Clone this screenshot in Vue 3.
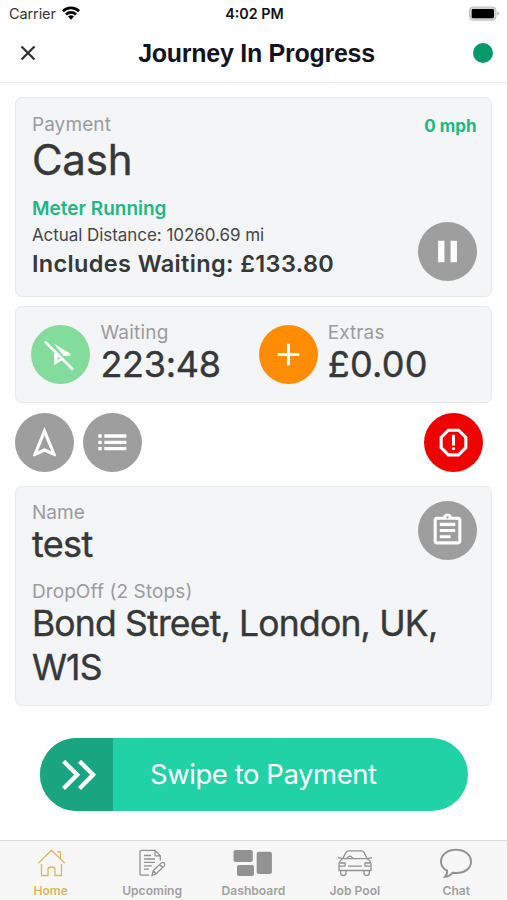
<script setup>
const tabs = [
  { id: 'home', label: 'Home', active: true },
  { id: 'upcoming', label: 'Upcoming' },
  { id: 'dashboard', label: 'Dashboard' },
  { id: 'pool', label: 'Job Pool' },
  { id: 'chat', label: 'Chat' },
]
</script>

<template>
  <div class="screen">
    <div class="status">
      <div class="carrier">
        <span>Carrier</span>
        <svg class="wifi" viewBox="0 0 18 14">
          <path d="M0 4.2A12.8 12.8 0 0 1 18 4.2L16.1 6.2A10 10 0 0 0 1.9 6.2Z" />
          <path d="M3 7.4A8.6 8.6 0 0 1 15 7.4L13.1 9.4A5.9 5.9 0 0 0 4.9 9.4Z" />
          <path d="M6 10.6A4.3 4.3 0 0 1 12 10.6L9 13.8Z" />
        </svg>
      </div>
      <span class="clock">4:02 PM</span>
      <svg class="battery" viewBox="0 0 32 16">
        <rect x="1.5" y="1" width="26.5" height="13.2" rx="3.4" fill="#d2d2d0" stroke="#c2c2bf" />
        <rect x="3.7" y="3.1" width="22.3" height="9.2" rx="1.4" fill="#000" />
        <path d="M29.4 5.4Q31 6.1 31 7.6Q31 9.1 29.4 9.8Z" fill="#aaa" />
      </svg>
    </div>

    <header class="header">
      <svg class="close" viewBox="0 0 16 16"><path d="M1.5 1.5L14.5 14.5M14.5 1.5L1.5 14.5" /></svg>
      <h1>Journey In Progress</h1>
      <i class="online"></i>
    </header>

    <main class="body">
      <section class="card payment">
        <div>
          <div class="label">Payment</div>
          <div class="cash">Cash</div>
          <div class="meter">Meter Running</div>
          <div class="distance">Actual Distance: 10260.69 mi</div>
          <div class="includes">Includes Waiting: £133.80</div>
        </div>
        <div class="side">
          <span class="speed">0 mph</span>
          <button class="round grey">
            <svg viewBox="0 0 24 24"><path d="M5.9 5.1h4.1v13.8H5.9zM14 5.1h4.1v13.8H14z" /></svg>
          </button>
        </div>
      </section>

      <section class="card meters">
        <div class="metric">
          <button class="round green">
            <svg class="full" viewBox="0 0 177 177">
              <path d="M69 56L118 86V92L98 93Z" />
              <path fill-rule="evenodd" d="M69 72L70 120L98 103ZM80 94L88 101L80 105Z" />
              <path d="M42 50L126 134" stroke="#fff" stroke-width="8" />
            </svg>
          </button>
          <div class="reading">
            <div class="label wide">Waiting</div>
            <div class="value waiting-value">223:48</div>
          </div>
        </div>
        <div class="metric">
          <button class="round orange">
            <svg viewBox="0 0 24 24"><path d="M19 13h-6v6h-2v-6H5v-2h6V5h2v6h6z" /></svg>
          </button>
          <div class="reading">
            <div class="label">Extras</div>
            <div class="value extras-value">£0.00</div>
          </div>
        </div>
      </section>

      <div class="actions">
        <button class="round grey">
          <svg viewBox="0 0 24 24"><path fill-rule="evenodd" d="M12 2L4.5 20.29l.71.71L12 18l6.79 3 .71-.71zM12 7.27l4.28 10.43L12 15.81L7.72 17.7z" /></svg>
        </button>
        <button class="round grey">
          <svg class="full" viewBox="0 0 177 177">
            <path d="M46 64h10v10H46zM46 83h10v10H46zM46 102h10v10H46zM64 64h66v10H64zM64 83h66v10H64zM64 102h66v10H64z" />
          </svg>
        </button>
        <button class="round red">
          <svg viewBox="0 0 24 24"><path fill-rule="evenodd" d="M15.73 3H8.27L3 8.27v7.46L8.27 21h7.46L21 15.73V8.27zM19 14.9L14.9 19H9.1L5 14.9V9.1L9.1 5h5.8L19 9.1z" /><path d="M11 7h2v7h-2z" /><circle cx="12" cy="16" r="1.1" /></svg>
        </button>
      </div>

      <section class="card trip">
        <button class="round grey clip">
          <svg viewBox="0 0 24 24"><path d="M7 15h7v2H7zm0-4h10v2H7zm0-4h10v2H7zm12-4h-4.18C14.4 1.84 13.3 1 12 1s-2.4.84-2.82 2H5c-1.1 0-2 .9-2 2v14c0 1.1.9 2 2 2h14c1.1 0 2-.9 2-2V5c0-1.1-.9-2-2-2zm-7-.25c.41 0 .75.34.75.75s-.34.75-.75.75-.75-.34-.75-.75.34-.75.75-.75zM19 19H5V5h14v14z" /></svg>
        </button>
        <div class="label">Name</div>
        <div class="value name-value">test</div>
        <div class="label drop-label">DropOff (2 Stops)</div>
        <div class="value address">Bond Street, London, UK, W1S</div>
      </section>

      <div class="swipe">
        <div class="thumb">
          <svg viewBox="0 0 220 220"><path d="M71 70L112 111L71 152M119 70L160 111L119 152" /></svg>
        </div>
        <span>Swipe to Payment</span>
      </div>
    </main>

    <nav class="tabs">
      <div v-for="t in tabs" :key="t.id" class="tab" :class="{ active: t.active }">
        <svg v-if="t.id === 'home'" viewBox="0 0 36 30">
          <path d="M5.3 15.2L18.5 2.2L31.8 15.2M24 3.8H27.5V10.6M8.5 16V27.5H15V21.5Q15 19 18.5 19Q22 19 22 21.5V27.5H28.5V16" />
        </svg>
        <svg v-else-if="t.id === 'upcoming'" viewBox="0 0 36 30">
          <path d="M15 27.2H7.5Q6 27.2 6 25.7V3.8Q6 2.3 7.5 2.3H21L26.3 7.8V12.5M21 2.3V7.8H26.3M10 7.5H17M10 11H21M10 14.4H21M10 17.8H18M10 21.2H15M18 27.5L19.3 22.5L27.7 14.7Q29 13.8 30.4 15.2Q31.4 16.6 30.3 17.8L22 26ZM19.3 22.5L22 26M25.8 16.5L28.5 19.5" />
        </svg>
        <svg v-else-if="t.id === 'dashboard'" class="solid" viewBox="0 0 42 30">
          <rect x="1.5" y="2" width="19.3" height="12" rx="2" />
          <rect x="5" y="17" width="17" height="11" rx="2" />
          <rect x="24.7" y="3.7" width="15.2" height="22.3" rx="2" />
        </svg>
        <svg v-else-if="t.id === 'pool'" viewBox="0 0 36 30">
          <path d="M5.8 10.7L9 4.4Q10 2.8 12 2.8H24Q26 2.8 27 4.4L30.2 10.7M1 9.7L5.8 10.7H30.2L35 9.7M5.8 10.7Q2 13 2 16V22.5H34V16Q34 13 30.2 10.7M3 15H8V18.2H2M33 15H28V18.2H34M11 18.2H25M3.7 22.5V25Q3.7 27.5 6.2 27.5Q9 27.5 9 25V22.5M32.3 22.5V25Q32.3 27.5 29.8 27.5Q27 27.5 27 25V22.5M10 10.5Q11 7.5 14 8.3L16 10.5" />
        </svg>
        <svg v-else class="chat" viewBox="0 0 36 30">
          <path d="M9 22.6C5 20.5 3 17.5 3 13.5C3 6.5 9.5 1.7 18 1.7S33 6.5 33 13.5S27 25 18 25L14.6 24.8C12.5 27.2 9.5 28.6 7 28.8C8.7 27 9.6 25 9 22.6Z" />
        </svg>
        <span>{{ t.label }}</span>
      </div>
    </nav>
  </div>
</template>

<style>
body { margin: 0; background: #fff; }
</style>

<style scoped>
.screen {
  width: 507px;
  height: 900px;
  display: flex;
  flex-direction: column;
  overflow: hidden;
  background: #fff;
  color: #373839;
  font-family: Inter, "Liberation Sans", sans-serif;
  white-space: nowrap;
}
.screen * { box-sizing: border-box; }
.status {
  height: 27px;
  padding: 0 7px 0 9px;
  display: grid;
  grid-template-columns: 1fr auto 1fr;
  align-items: center;
  font-size: 14.5px;
  color: #333;
}
.carrier { display: flex; align-items: center; gap: 6px; }
.carrier span { letter-spacing: -0.1px; }
.wifi { width: 18px; height: 14px; margin-top: -2px; fill: #000; }
.clock { font-weight: 600; font-size: 14.3px; color: #111; }
.battery { width: 32px; height: 16px; justify-self: end; }
.header {
  height: 56px;
  padding: 0 14px 3px 20px;
  display: grid;
  grid-template-columns: 20px 1fr 20px;
  align-items: center;
  border-bottom: 1.5px solid #ececee;
}
.close { width: 16px; height: 16px; fill: none; stroke: #333; stroke-width: 2.3; }
h1 {
  margin: 0;
  text-align: center;
  font: bold 25px/30px "Liberation Sans", sans-serif;
  letter-spacing: -0.27px;
  color: #13131f;
}
.online { width: 20px; height: 20px; border-radius: 50%; background: #069a67; }
.body { flex: 1; padding: 14px 15px 0 15.4px; }
.card {
  background: #f3f5f6;
  border: 1.5px solid #e6e8ea;
  border-radius: 7px;
}
.payment { height: 200px; padding: 15px 14.5px 15px 15.5px; display: flex; justify-content: space-between; }
.label { font-size: 19px; line-height: 24px; letter-spacing: 0.1px; color: #9b9c9d; }
.label.wide { letter-spacing: 0.2px; }
.cash { margin-top: -1px; font-size: 42px; line-height: 48px; letter-spacing: -0.2px; -webkit-text-stroke: 0.4px currentColor; }
.meter { margin-top: 13px; font-size: 19px; line-height: 24px; font-weight: 600; color: #1fb785; }
.distance { margin-top: 1px; font-size: 17px; line-height: 26px; color: #454647; letter-spacing: -0.05px; }
.includes { font-size: 23.5px; line-height: 32px; font-weight: 600; letter-spacing: 0.36px; }
.side { display: flex; flex-direction: column; justify-content: space-between; align-items: flex-end; }
.speed { margin-top: 2px; font-size: 17px; line-height: 22px; font-weight: 700; color: #1fb785; }
.round {
  width: 59px;
  height: 59px;
  padding: 0;
  border: 0;
  border-radius: 50%;
  display: flex;
  align-items: center;
  justify-content: center;
}
.round svg { width: 37px; height: 37px; fill: #fff; }
.round svg.full { width: 59px; height: 59px; }
.grey { background: #9e9e9e; }
.green { background: #83dc9c; }
.orange { background: #ff8c05; }
.red { background: #ee0202; }
.meters {
  height: 97px;
  margin-top: 9px;
  padding: 0 15px 0 15px;
  display: grid;
  grid-template-columns: 227.3px 1fr;
  align-items: center;
}
.metric { display: flex; align-items: center; gap: 10px; }
.reading { padding-bottom: 4px; }
.value { font-size: 36px; line-height: 40px; -webkit-text-stroke: 0.4px currentColor; }
.reading .value { margin-top: -1px; }
.waiting-value { letter-spacing: -0.3px; }
.extras-value { letter-spacing: 0.3px; }
.actions { display: flex; gap: 9px; margin: 9.5px 9px 0 0; }
.red { margin-left: auto; }
.trip { position: relative; height: 220px; margin-top: 14.5px; padding: 14px 15px 0 15.5px; }
.clip { position: absolute; top: 14px; right: 14.5px; }
.name-value { margin-top: -1px; letter-spacing: -0.6px; }
.drop-label { margin-top: 16px; }
.address { width: 430px; line-height: 43.7px; white-space: normal; margin-top: -2px; letter-spacing: -0.8px; font-size: 35.5px; }
.swipe {
  height: 73px;
  margin: 32px 24px 0 24.6px;
  display: flex;
  align-items: center;
  border-radius: 37px;
  overflow: hidden;
  background: #21d2a6;
  color: #fff;
  font-size: 27.5px;
  letter-spacing: -0.45px;
}
.thumb { width: 73px; height: 73px; background: #1aa581; }
.thumb svg { display: block; width: 73px; height: 73px; fill: none; stroke: #fff; stroke-width: 13; }
.swipe span { margin-left: 37px; padding-bottom: 1px; }
.tabs {
  height: 60px;
  display: grid;
  grid-template-columns: repeat(5, 1fr);
  background: #f7f7f7;
  border-top: 1.5px solid #dcdcdc;
}
.tab { display: flex; flex-direction: column; align-items: center; padding-top: 7px; color: #929292; }
.tab svg { height: 30px; fill: none; stroke: currentColor; stroke-width: 1.3; }
.tab svg.solid { fill: currentColor; stroke: none; }
.tab svg.chat { stroke-width: 1.9; }
.tab span { font-size: 12.1px; line-height: 16px; margin-top: 5px; font-weight: 600; color: #a0a0a0; }
.tab.active, .tab.active span { color: #dcb85a; }
</style>
